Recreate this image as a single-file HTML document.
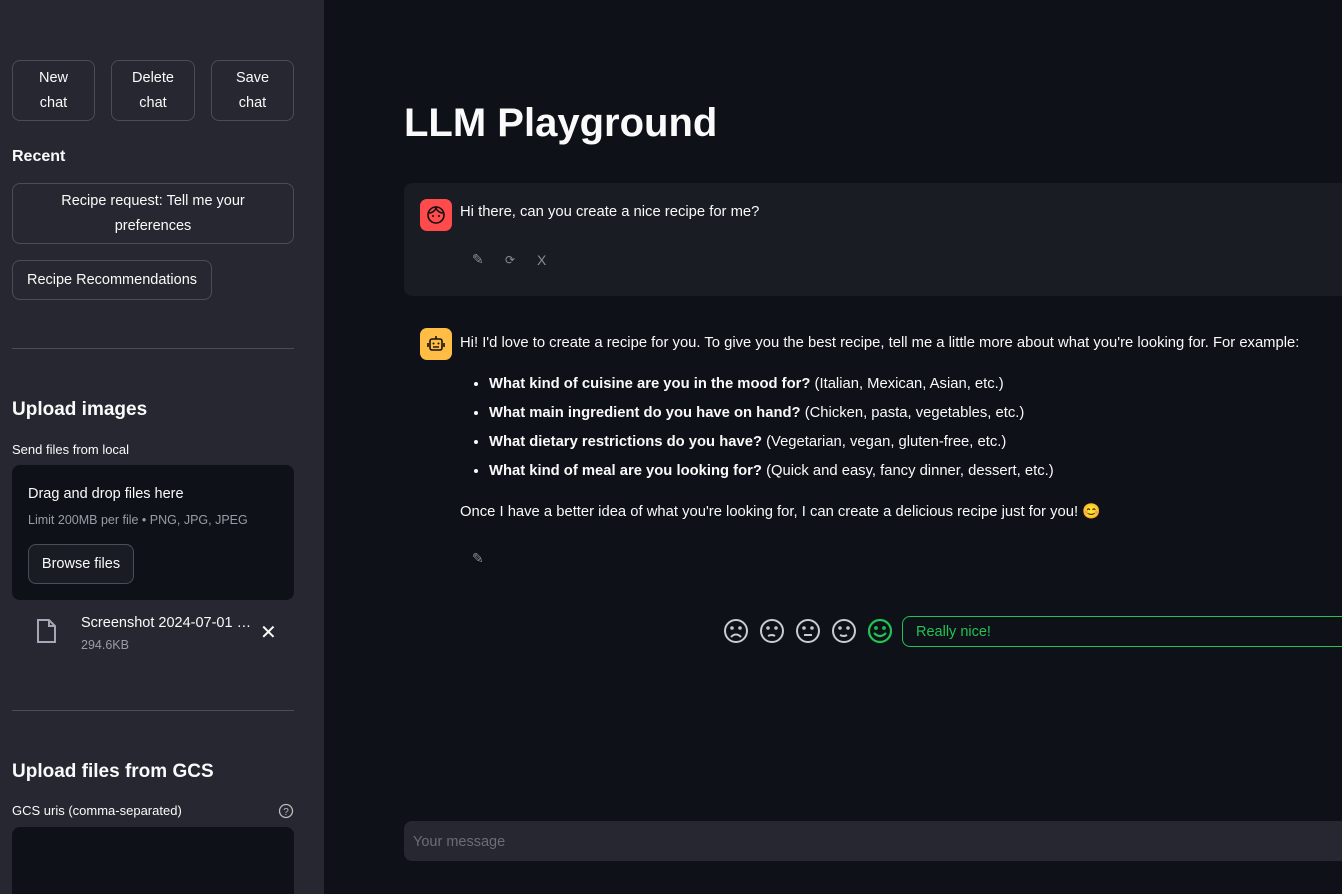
<!DOCTYPE html>
<html><head><meta charset="utf-8"><style>
*{box-sizing:border-box;margin:0;padding:0}
html,body{width:1342px;height:894px;overflow:hidden}
body{background:#0e1117;font-family:"Liberation Sans",sans-serif;color:#fafafa;position:relative}
.sb{position:absolute;left:0;top:0;width:324px;height:894px;background:#262730}
.btn{position:absolute;border:1px solid #4a4c57;border-radius:8px;background:#262730;color:#fafafa;font-size:14.5px;text-align:center;display:flex;align-items:center;justify-content:center;line-height:25px}
.hr{position:absolute;left:12px;width:282px;height:1px;background:#4a4c57}
.abs{position:absolute}
.main{position:absolute;left:324px;top:0;right:0;bottom:0}
.av{position:absolute;width:32px;height:32px;border-radius:7px}
li{margin-bottom:9px}
</style></head><body>
<div class="sb">
 <div class="btn" style="left:12px;top:60px;width:83px;height:61px">New<br>chat</div>
 <div class="btn" style="left:111px;top:60px;width:84px;height:61px">Delete<br>chat</div>
 <div class="btn" style="left:211px;top:60px;width:83px;height:61px">Save<br>chat</div>
 <div class="abs" style="left:12px;top:148px;font-size:16px;font-weight:bold">Recent</div>
 <div class="btn" style="left:12px;top:183px;width:282px;height:61px">Recipe request: Tell me your<br>preferences</div>
 <div class="btn" style="left:12px;top:260px;width:200px;height:40px">Recipe Recommendations</div>
 <div class="hr" style="top:348px"></div>
 <div class="abs" style="left:12px;top:399px;font-size:19px;font-weight:bold">Upload images</div>
 <div class="abs" style="left:12px;top:442px;font-size:13px">Send files from local</div>
 <div class="abs" style="left:12px;top:465px;width:282px;height:135px;background:#0e1117;border-radius:8px">
  <div class="abs" style="left:16px;top:21px;font-size:14.5px">Drag and drop files here</div>
  <div class="abs" style="left:16px;top:48px;font-size:12.5px;color:#9a9ca5">Limit 200MB per file • PNG, JPG, JPEG</div>
  <div class="btn" style="left:16px;top:79px;width:106px;height:40px;background:#1a1c24">Browse files</div>
 </div>
 <svg class="abs" style="left:36px;top:618px" width="22" height="26" viewBox="0 0 22 26"><path d="M2 2h11l6 6v16H2z M13 2v6h6" fill="none" stroke="#a3a8b8" stroke-width="2"/></svg>
 <div class="abs" style="left:81px;top:615px;font-size:14.5px">Screenshot 2024-07-01 …</div>
 <div class="abs" style="left:81px;top:638px;font-size:12.5px;color:#9a9ca5">294.6KB</div>
 <div class="abs" style="left:260px;top:620px;font-size:20px;color:#fafafa">✕</div>
 <div class="hr" style="top:710px"></div>
 <div class="abs" style="left:12px;top:761px;font-size:19px;font-weight:bold">Upload files from GCS</div>
 <div class="abs" style="left:12px;top:803px;font-size:13px">GCS uris (comma-separated)</div>
 <svg class="abs" style="left:278px;top:803px" width="16" height="16"><circle cx="8" cy="8" r="6.5" fill="none" stroke="#bbb" stroke-width="1.3"/><text x="8" y="12" font-size="10" text-anchor="middle" fill="#bbb" font-family="Liberation Sans">?</text></svg>
 <div class="abs" style="left:12px;top:827px;width:282px;height:80px;background:#0e1117;border-radius:8px"></div>
</div>
<div class="main">
 <div class="abs" style="left:80px;top:101px;font-size:40px;font-weight:bold">LLM Playground</div>
 <div class="abs" style="left:80px;top:183px;width:950px;height:113px;background:#1a1c24;border-radius:8px"></div>
 <div class="av" style="left:96px;top:199px;background:#ff4b4b"><svg width="32" height="32"><circle cx="16" cy="16" r="8" fill="none" stroke="#111" stroke-width="1.6"/><path d="M9 14c3 0 6-2 7-5c1 3 4 5 7 5" fill="none" stroke="#111" stroke-width="1.6"/><circle cx="13" cy="17" r="1" fill="#111"/><circle cx="19" cy="17" r="1" fill="#111"/></svg></div>
 <div class="abs" style="left:136px;top:204px;font-size:14.8px">Hi there, can you create a nice recipe for me?</div>
 <div class="abs" style="left:148px;top:251px;font-size:14px;color:#8a8c94">✎</div>
 <div class="abs" style="left:181px;top:253px;font-size:12px;color:#8a8c94">⟳</div>
 <div class="abs" style="left:213px;top:252px;font-size:14px;color:#8a8c94">X</div>
 <div class="av" style="left:96px;top:328px;background:#ffbd45"><svg width="32" height="32"><rect x="10" y="11" width="12" height="11" rx="2" fill="none" stroke="#111" stroke-width="1.6"/><path d="M16 8v3M8 15v4M24 15v4" stroke="#111" stroke-width="1.6"/><circle cx="13.5" cy="15.5" r="1" fill="#111"/><circle cx="18.5" cy="15.5" r="1" fill="#111"/><path d="M13 19h6" stroke="#111" stroke-width="1.4"/></svg></div>
 <div class="abs" style="left:136px;top:333px;font-size:14.8px;line-height:20px;width:900px">
  <div>Hi! I'd love to create a recipe for you. To give you the best recipe, tell me a little more about what you're looking for. For example:</div>
  <ul style="margin:21px 0 0 29px">
   <li><b>What kind of cuisine are you in the mood for?</b> (Italian, Mexican, Asian, etc.)</li>
   <li><b>What main ingredient do you have on hand?</b> (Chicken, pasta, vegetables, etc.)</li>
   <li><b>What dietary restrictions do you have?</b> (Vegetarian, vegan, gluten-free, etc.)</li>
   <li><b>What kind of meal are you looking for?</b> (Quick and easy, fancy dinner, dessert, etc.)</li>
  </ul>
  <div style="margin-top:21px">Once I have a better idea of what you're looking for, I can create a delicious recipe just for you! 😊</div>
 </div>
 <div class="abs" style="left:148px;top:550px;font-size:14px;color:#8a8c94">✎</div>
 <svg class="abs" style="left:398px;top:617px" width="180" height="28">
  <g fill="none" stroke="#c8cbd0" stroke-width="2">
   <circle cx="14" cy="14" r="11"/><circle cx="10" cy="11" r=".8"/><circle cx="18" cy="11" r=".8"/><path d="M9 20q5-5 10 0"/>
   <circle cx="50" cy="14" r="11"/><circle cx="46" cy="11" r=".8"/><circle cx="54" cy="11" r=".8"/><path d="M46 19q4-2 7 0"/>
   <circle cx="86" cy="14" r="11"/><circle cx="82" cy="11" r=".8"/><circle cx="90" cy="11" r=".8"/><path d="M82 18h8"/>
   <circle cx="122" cy="14" r="11"/><circle cx="118" cy="11" r=".8"/><circle cx="126" cy="11" r=".8"/><path d="M118 18q4 2 7 0"/>
  </g>
  <g fill="none" stroke="#21c354" stroke-width="2.2"><circle cx="158" cy="14" r="11"/><circle cx="154" cy="11" r=".8"/><circle cx="162" cy="11" r=".8"/><path d="M152 16q6 6 12 0"/></g>
 </svg>
 <div class="abs" style="left:578px;top:616px;width:460px;height:31px;border:1px solid #21c354;border-radius:8px;color:#21c354;font-size:14.5px;padding:7px 0 0 13px">Really nice!</div>
 <div class="abs" style="left:80px;top:821px;width:950px;height:40px;background:#262730;border-radius:8px;color:#6b6d76;font-size:14.5px;padding:13px 0 0 9px">Your message</div>
</div>
</body></html>
